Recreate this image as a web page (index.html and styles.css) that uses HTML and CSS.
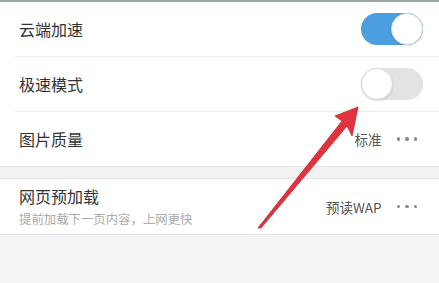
FILE: index.html
```html
<!DOCTYPE html>
<html lang="zh">
<head>
<meta charset="utf-8">
<link rel="stylesheet" href="styles.css">
</head>
<body>
<div class="topline"></div>
<div class="group">
  <div class="row">
    <span class="label">云端加速</span>
    <span class="toggle on"><span class="knob"></span></span>
  </div>
  <div class="row">
    <span class="label">极速模式</span>
    <span class="toggle off"><span class="knob"></span></span>
  </div>
  <div class="row last">
    <span class="label">图片质量</span>
    <span class="right"><span class="value">标准</span><span class="dots"><i></i><i></i><i></i></span></span>
  </div>
</div>
<div class="band"></div>
<div class="group">
  <div class="row tall last">
    <span class="stack"><span class="label">网页预加载</span><span class="sub">提前加载下一页内容，上网更快</span></span>
    <span class="right"><span class="value">预读WAP</span><span class="dots"><i></i><i></i><i></i></span></span>
  </div>
</div>
<div class="rest"></div>
<svg class="arrow" width="439" height="283" viewBox="0 0 439 283">
  <polygon points="358,107 335,116 342,121 258,228 261,228 347,126 352,136" fill="#e2323d" stroke="#c4242f" stroke-width="0.8" stroke-linejoin="round"/>
</svg>
</body>
</html>
```
FILE: styles.css
```css
html, body {
  margin: 0;
  padding: 0;
}
body {
  width: 439px;
  height: 283px;
  overflow: hidden;
  background: #f4f4f4;
  font-family: "Noto Sans CJK SC", "Noto Sans", sans-serif;
  color: #333;
  position: relative;
}
.topline {
  height: 2px;
  background: #9aa6a4;
}
.group {
  background: #fff;
  padding-left: 15px;
}
.row {
  height: 54px;
  display: flex;
  align-items: center;
  justify-content: space-between;
  padding-left: 4px;
  padding-right: 16px;
  border-bottom: 1px solid #ebebeb;
}
.row.last {
  border-bottom: none;
}
.row.tall {
  height: 55px;
  padding-right: 21px;
}
.row .right {
  margin-right: 5px;
}
.row.tall .right {
  margin-right: 0;
}
.label {
  font-size: 16px;
  line-height: 20px;
}
.stack {
  display: flex;
  flex-direction: column;
  gap: 5px;
  margin-top: -1px;
}
.sub {
  font-size: 12.4px;
  line-height: 16px;
  color: #aaa;
}
.toggle {
  width: 62px;
  height: 32px;
  border-radius: 16px;
  display: flex;
  align-items: center;
  box-sizing: border-box;
}
.toggle.on {
  background: #4b9fe1;
  justify-content: flex-end;
}
.toggle.off {
  background: #e3e3e3;
  justify-content: flex-start;
}
.knob {
  width: 32px;
  height: 32px;
  border-radius: 50%;
  background: #fff;
  box-sizing: border-box;
  border: 1px solid #d8d8d8;
  box-shadow: 0 1px 2px rgba(0,0,0,0.12);
}
.right {
  display: flex;
  align-items: center;
  gap: 15px;
}
.value {
  font-size: 13.5px;
  color: #555;
}
.row.tall .value {
  margin-top: 1px;
}
.dots {
  display: flex;
  gap: 5px;
  margin-right: 1px;
}
.dots i {
  width: 3.5px;
  height: 3.5px;
  border-radius: 50%;
  background: #8a8a8a;
}
.band {
  height: 11px;
  background: #f2f2f2;
  border-top: 1px solid #e4e4e4;
  border-bottom: 1px solid #e4e4e4;
}
.rest {
  border-top: 1px solid #e6e6e6;
}
.arrow {
  position: absolute;
  left: 0;
  top: 0;
}
```
